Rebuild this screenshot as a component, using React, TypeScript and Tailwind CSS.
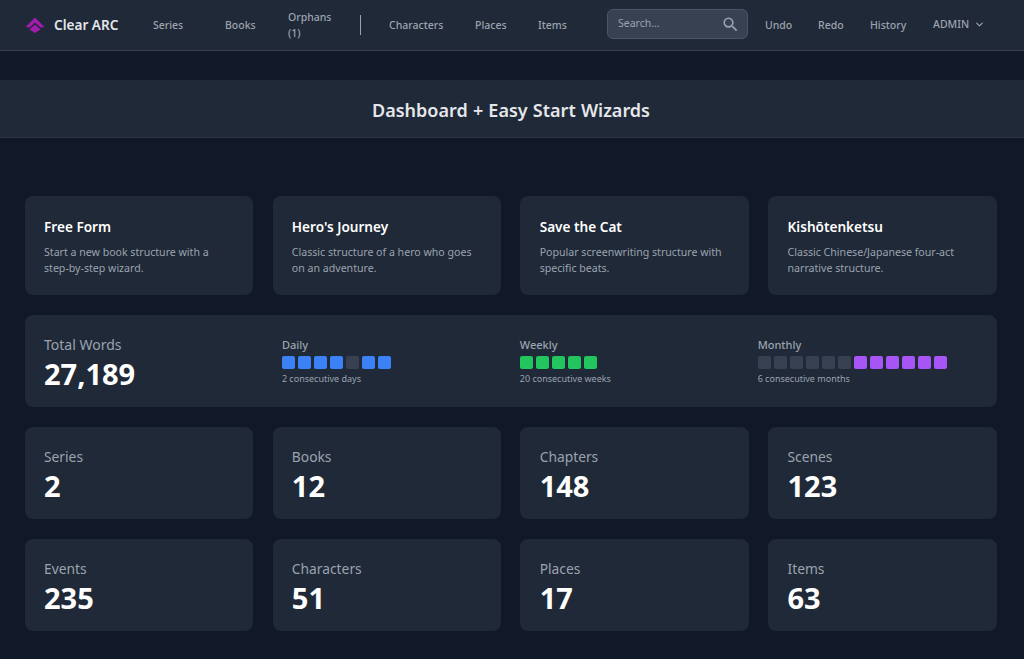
import { ChevronDown } from 'lucide-react'
import { MdSearch } from 'react-icons/md'

const wizards = [
  { title: 'Free Form', text: 'Start a new book structure with a step-by-step wizard.' },
  { title: "Hero's Journey", text: 'Classic structure of a hero who goes on an adventure.' },
  { title: 'Save the Cat', text: 'Popular screenwriting structure with specific beats.' },
  { title: 'Kishōtenketsu', text: 'Classic Chinese/Japanese four-act narrative structure.' },
]

const stats = [
  ['Series', '2'], ['Books', '12'], ['Chapters', '148'], ['Scenes', '123'],
  ['Events', '235'], ['Characters', '51'], ['Places', '17'], ['Items', '63'],
]

const blue = 'bg-[#3b82f6]'
const green = 'bg-[#22c55e]'
const purple = 'bg-[#a855f7]'
const off = 'bg-[#374151]'

const streaks = [
  { label: 'Daily', note: '2 consecutive days', days: [blue, blue, blue, blue, off, blue, blue] },
  { label: 'Weekly', note: '20 consecutive weeks', days: [green, green, green, green, green] },
  { label: 'Monthly', note: '6 consecutive months', days: [off, off, off, off, off, off, purple, purple, purple, purple, purple, purple] },
]

function Logo() {
  return (
    <svg width="20" height="16" viewBox="0 0 20 16" className="mb-[2px] shrink-0">
      <path d="M10 0.5 L19.5 10 L15.5 10.5 L10 5.5 L4.5 10.5 L0.5 10 Z" fill="#a21caf" />
      <path d="M10 7.5 L15.5 12.5 L10 16 L4.5 12.5 Z" fill="#a21caf" />
    </svg>
  )
}

function Stat({ label, value }: { label: string; value: string }) {
  return (
    <div className="h-[92px] rounded-lg bg-[#1f2937] px-[19.25px] pt-[19px]">
      <p className="text-[13.8px] leading-[22px] text-[#9ca3af]">{label}</p>
      <p className="text-[29px] leading-[35px] font-bold text-white">{value}</p>
    </div>
  )
}

export default function App() {
  return (
    <div className="min-h-[659px] bg-[#111827] font-['Noto_Sans',sans-serif]">
      <nav className="flex h-[51px] items-center border-b border-[#374151] bg-[#1f2937] pl-[25px] pt-[1px] text-[10.5px] font-medium text-[#9ca3af]">
        <Logo />
        <span className="mb-[1px] ml-[9px] w-[99px] text-[13.6px] font-semibold text-[#e5e7eb]">Clear ARC</span>
        <span className="w-[72px]">Series</span>
        <span className="w-[63px]">Books</span>
        <span className="mb-[2px] w-[40px] leading-[16px]">Orphans (1)</span>
        <span className="mb-[2px] ml-[32px] h-[20px] w-px bg-[#9ca3af]" />
        <span className="ml-[28px] w-[86px]">Characters</span>
        <span className="w-[63px]">Places</span>
        <span className="w-[69px]">Items</span>
        <div className="mb-[3px] flex h-[30px] w-[141px] items-center justify-between rounded-md border border-[#4b5563] bg-[#374151] pl-[10px] pr-[7px] text-[#9ca3af]">
          <span className="font-normal">Search...</span>
          <MdSearch size={19} />
        </div>
        <span className="ml-[17px] w-[53px]">Undo</span>
        <span className="w-[52px]">Redo</span>
        <span className="w-[63px]">History</span>
        <span className="mb-[2px] flex items-center gap-[5px]">ADMIN <ChevronDown size={11} strokeWidth={2.5} /></span>
      </nav>

      <header className="mt-[29px] flex h-[58px] items-center justify-center border-b border-[#2b3544] bg-[#1f2937] pt-[3px] pr-[2px]">
        <h1 className="text-[18px] font-semibold text-[#e5e7eb] [word-spacing:0.5px]">Dashboard + Easy Start Wizards</h1>
      </header>

      <main className="mt-[58px] ml-[24.75px] flex w-[972px] flex-col gap-[20px]">
        <div className="grid grid-cols-4 gap-x-[19.4px] gap-y-[20px]">
          {wizards.map(w => (
            <div key={w.title} className="h-[99px] rounded-lg bg-[#1f2937] px-[19.25px] pt-[19px]">
              <h2 className="text-[13.6px] leading-[24px] font-semibold text-white">{w.title}</h2>
              <p className="mt-[5px] text-[10.6px] leading-[16px] text-[#9ca3af]">{w.text}</p>
            </div>
          ))}
        </div>

        <div className="grid h-[92px] grid-cols-4 gap-[18px] rounded-lg bg-[#1f2937] px-[19.25px] pt-[19px]">
          <div>
            <p className="text-[14px] leading-[22px] text-[#9ca3af]">Total Words</p>
            <p className="text-[29px] leading-[35px] font-bold text-white">27,189</p>
          </div>
          {streaks.map(s => (
            <div key={s.label} className="pt-[3px]">
              <p className="text-[11px] leading-[16px] font-medium text-[#9ca3af]">{s.label}</p>
              <div className="mt-[3px] flex gap-[3px]">
                {s.days.map((c, i) => <span key={i} className={`h-[13px] w-[13px] rounded-[2px] ${c}`} />)}
              </div>
              <p className="mt-[3px] text-[9px] leading-[14px] text-[#9ca3af]">{s.note}</p>
            </div>
          ))}
        </div>

        <div className="grid grid-cols-4 gap-x-[19.4px] gap-y-[20px]">
          {stats.map(([label, value]) => <Stat key={label} label={label} value={value} />)}
        </div>
      </main>
    </div>
  )
}
